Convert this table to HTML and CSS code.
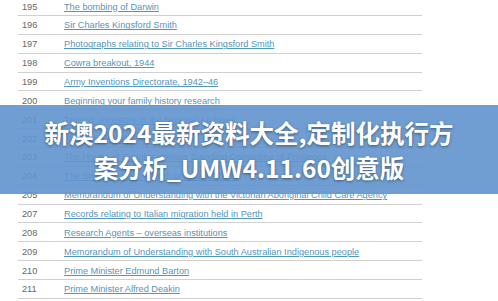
FILE: index.html
```html
<!DOCTYPE html>
<html lang="zh">
<head>
<meta charset="utf-8">
<link rel="stylesheet" href="styles.css">
</head>
<body>
<div class="page">
  <div class="list">
    <div class="row"><span class="num">195</span><a class="link" href="#">The bombing of Darwin</a></div>
    <div class="row"><span class="num">196</span><a class="link" href="#">Sir Charles Kingsford Smith</a></div>
    <div class="row"><span class="num">197</span><a class="link" href="#">Photographs relating to Sir Charles Kingsford Smith</a></div>
    <div class="row"><span class="num">198</span><a class="link" href="#">Cowra breakout, 1944</a></div>
    <div class="row"><span class="num">199</span><a class="link" href="#">Army Inventions Directorate, 1942–46</a></div>
    <div class="row"><span class="num">200</span><a class="link" href="#">Beginning your family history research</a></div>
    <div class="row"><span class="num">201</span><a class="link" href="#">Tracing ancestors in the National Archives</a></div>
    <div class="row"><span class="num">202</span><a class="link" href="#">The Petrov Affair</a></div>
    <div class="row"><span class="num">203</span><a class="link" href="#">The House of Representatives Standing Committee of Privileges</a></div>
    <div class="row"><span class="num">204</span><a class="link" href="#">The Brisbane Line, a myth or a case, 1966</a></div>
    <div class="row"><span class="num">205</span><a class="link" href="#">Memorandum of Understanding with the Victorian Aboriginal Child Care Agency</a></div>
    <div class="row"><span class="num">207</span><a class="link" href="#">Records relating to Italian migration held in Perth</a></div>
    <div class="row"><span class="num">208</span><a class="link" href="#">Research Agents – overseas institutions</a></div>
    <div class="row"><span class="num">209</span><a class="link" href="#">Memorandum of Understanding with South Australian Indigenous people</a></div>
    <div class="row"><span class="num">210</span><a class="link" href="#">Prime Minister Edmund Barton</a></div>
    <div class="row"><span class="num">211</span><a class="link" href="#">Prime Minister Alfred Deakin</a></div>
  </div>
  <div class="banner">
    <h1 class="title">新澳2024最新资料大全,定制化执行方<br>案分析_UMW4.11.60创意版</h1>
  </div>
</div>
</body>
</html>
```
FILE: styles.css
```css
html, body {
  margin: 0;
  padding: 0;
  background: #ffffff;
}
.page {
  position: relative;
  width: 498px;
  height: 301px;
  overflow: hidden;
  font-family: "Liberation Sans", Arial, sans-serif;
}
.list {
  margin: -2.87px 0 0 18px;
  width: 404px;
}
.row {
  box-sizing: border-box;
  height: 18.87px;
  display: flex;
  align-items: center;
  padding-top: 1px;
  border-bottom: 1px solid #d0d0d0;
  font-size: 9.2px;
}
.num {
  width: 46px;
  padding-left: 4px;
  box-sizing: border-box;
  color: #666666;
  flex: none;
}
.link {
  color: #5595bb;
  text-decoration: underline;
  white-space: nowrap;
}
.banner {
  position: absolute;
  left: 0;
  top: 105px;
  width: 498px;
  height: 89px;
  background: rgba(96, 148, 206, 0.9);
  display: flex;
  align-items: center;
  justify-content: center;
}
.title {
  margin: 0;
  color: #ffffff;
  font-family: "Noto Sans CJK SC", "Noto Sans", sans-serif;
  font-weight: 700;
  font-size: 24.5px;
  line-height: 35px;
  text-align: center;
  text-shadow: 0 1px 3px rgba(0, 0, 0, 0.45);
}
```
